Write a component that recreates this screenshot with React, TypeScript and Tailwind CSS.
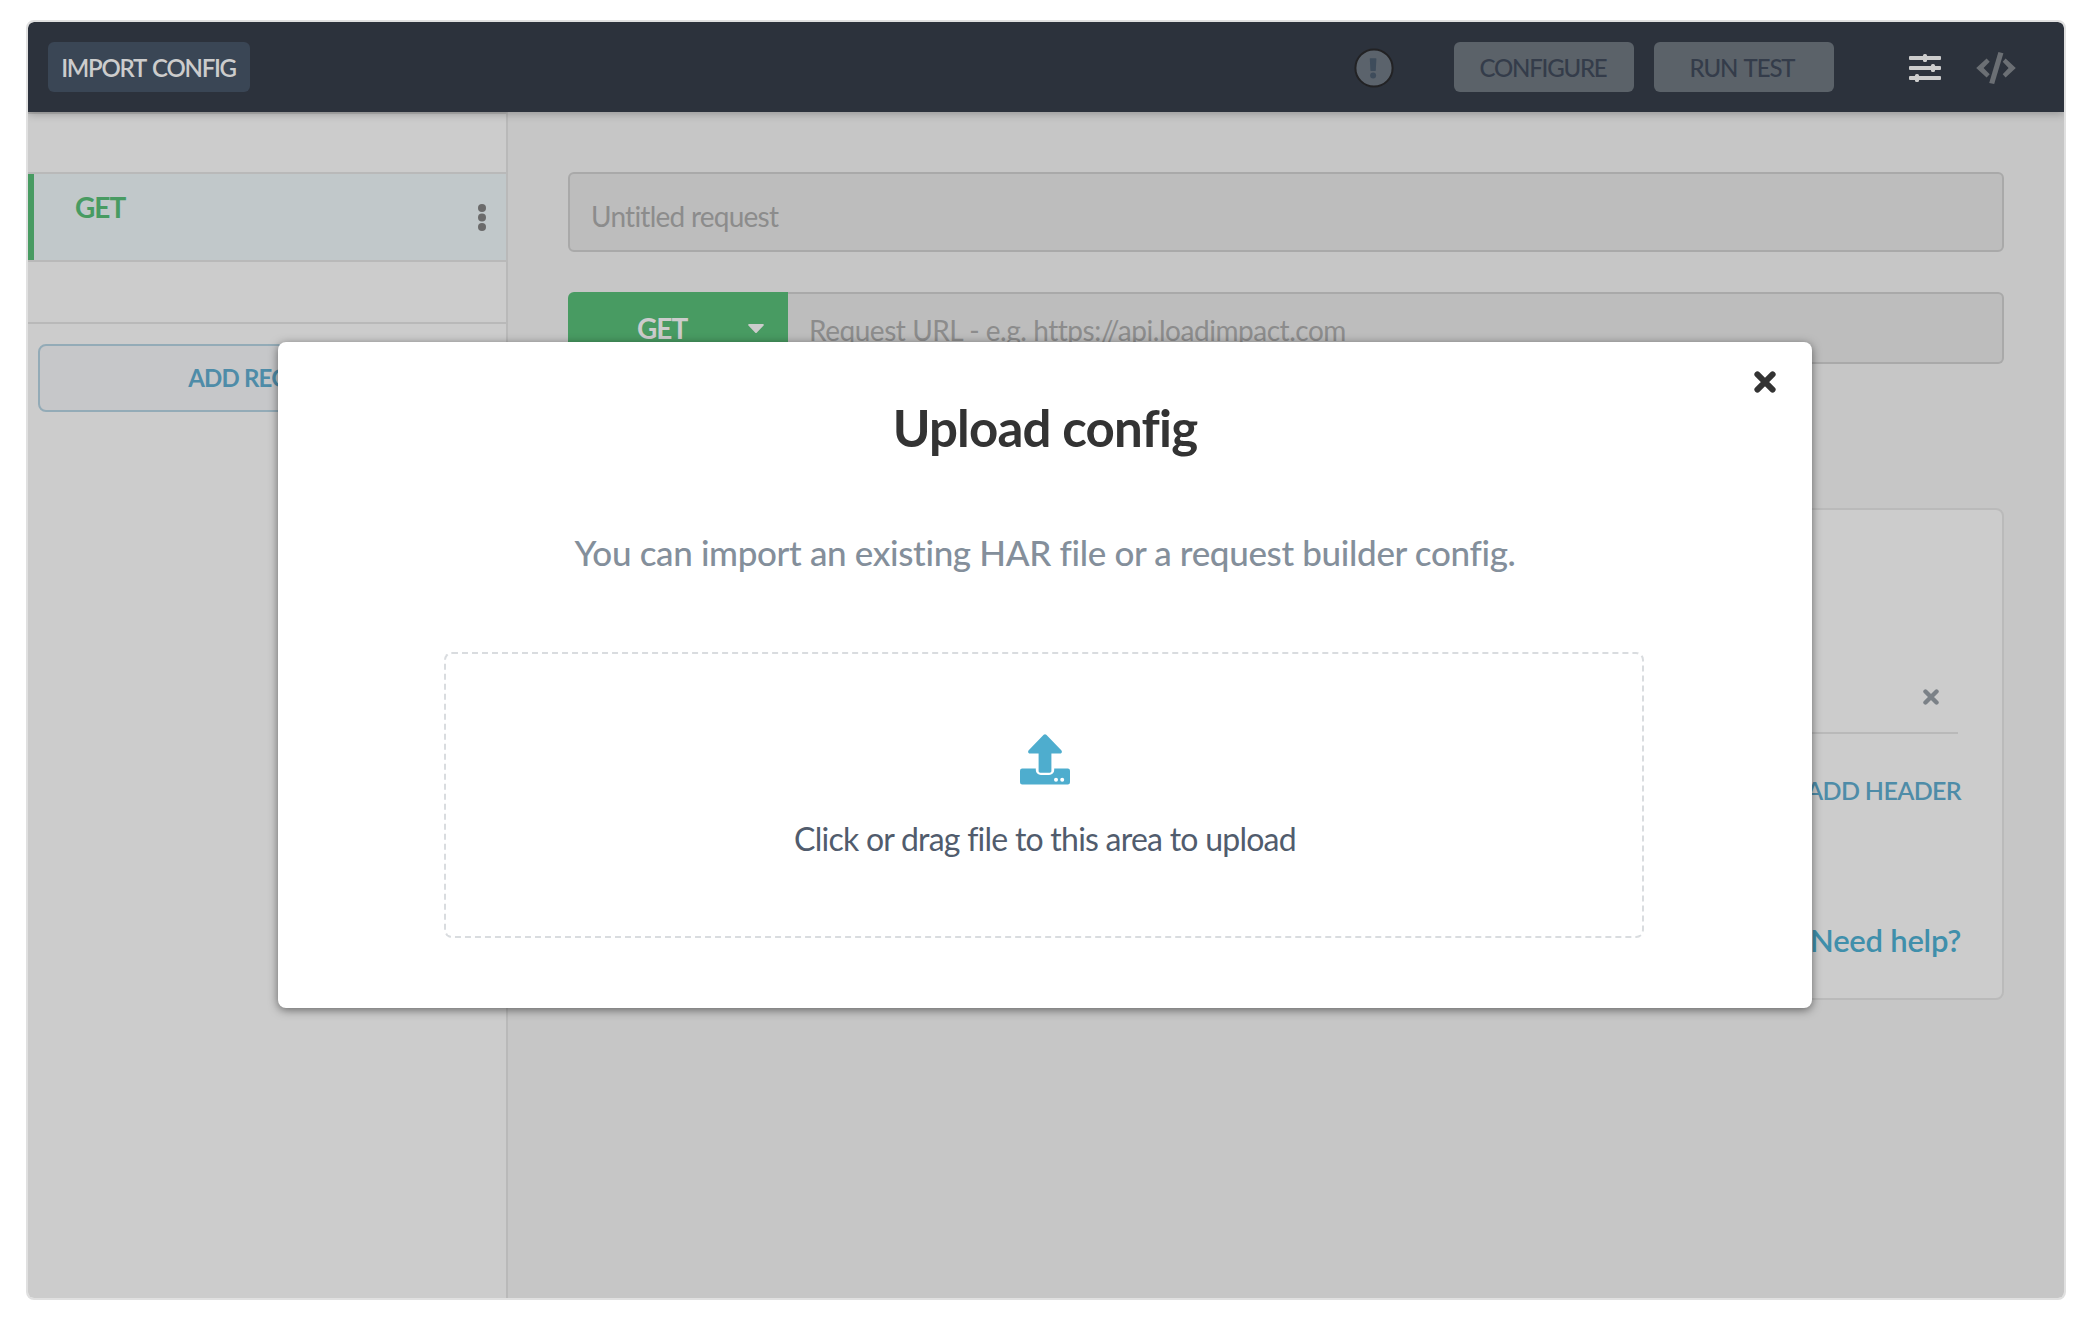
function AlertBadge() {
  return (
    <svg className="h-10 w-10" viewBox="0 0 40 40">
      <circle cx="20" cy="20" r="18.6" fill="#5b636c" stroke="#222224" strokeWidth="2" />
      <path d="M16.4 10.2h5.4a.6.6 0 0 1 .6.7l-.6 11.3a1 1 0 0 1-1 .9h-3.4a1 1 0 0 1-1-.9l-.6-11.3a.6.6 0 0 1 .6-.7z" fill="#3e4c5b" />
      <circle cx="19.1" cy="27.4" r="3" fill="#3e4c5b" />
    </svg>
  );
}

function SlidersIcon() {
  return (
    <svg className="h-8 w-8" viewBox="0 0 32 32" fill="#cccccc">
      <rect x="0" y="4" width="32" height="4" rx="1" />
      <rect x="0" y="14" width="32" height="4" rx="1" />
      <rect x="0" y="24" width="32" height="4" rx="1" />
      <rect x="14" y="2" width="4" height="8" rx="1.5" />
      <rect x="22" y="12" width="4" height="8" rx="1.5" />
      <rect x="6" y="22" width="4" height="8" rx="1.5" />
    </svg>
  );
}

function CodeIcon() {
  return (
    <svg className="h-8 w-10" viewBox="0 0 40 32" fill="#6b6f74">
      <path d="M.2 16 10.6 6.600 13.700 9.800 7.600 16l6.100 6.200-3.100 3.200z" />
      <path d="M39.8 16 29.6 6.6 26.7 9.8 32.6 16l-5.9 6.2 2.9 3.2z" />
      <path d="M22.4 0 27.4 1.2 18.2 32 13.2 31z" />
    </svg>
  );
}

function CrossIcon({ className }: { className: string }) {
  return (
    <svg className={className} viewBox="0 0 22 22" fill="none" stroke="currentColor" strokeWidth="6" strokeLinecap="round">
      <path d="M3.4 3.4 18.6 18.6M18.6 3.4 3.4 18.6" />
    </svg>
  );
}

function UploadIcon() {
  return (
    <svg className="h-[51px] w-[50px]" viewBox="0 0 50 51" fill="#4eadce">
      <path d="M23.7.6a1.8 1.8 0 0 1 2.6 0L41.3 17.4c1.2 1.4.5 3.6-1.3 3.6H31.4V40.4a1.6 1.6 0 0 1-1.6 1.6H20.2a1.6 1.6 0 0 1-1.6-1.6V21H10c-1.8 0-2.5-2.2-1.3-3.6z" transform="translate(0 .2) scale(1 .92)" />
      <path
        fillRule="evenodd"
        d="M2.2 34.6H15.8V36a5 5 0 0 0 5 5h8.4a5 5 0 0 0 5-5v-1.4H47.8A2.2 2.2 0 0 1 50 36.8V48.2a2.2 2.2 0 0 1-2.2 2.2H2.2A2.2 2.2 0 0 1 0 48.2V36.8A2.2 2.2 0 0 1 2.2 34.6zM36 43.7a2 2 0 1 0 0 4 2 2 0 0 0 0-4zM42.2 43.7a2 2 0 1 0 0 4 2 2 0 0 0 0-4z"
      />
    </svg>
  );
}

function Header() {
  return (
    <header className="relative z-10 flex h-[90px] shrink-0 items-center rounded-t-md bg-[#2c323c] px-5 shadow-[0_2px_8px_rgba(0,0,0,0.25)]">
      <button className="h-[50px] w-[202px] rounded-md bg-[#3a4655] pr-px pt-px text-[24px] font-semibold tracking-[-1.25px] text-[#cccccc] [word-spacing:2px]">
        IMPORT CONFIG
      </button>
      <div className="ml-auto mr-[60px] pt-px">
        <AlertBadge />
      </div>
      <div className="flex gap-5 text-[24px] font-medium text-[#343c4a]">
        <button className="h-[50px] w-[180px] rounded-md bg-[#5b6269] pr-0.5 pt-px tracking-[-1.2px]">CONFIGURE</button>
        <button className="h-[50px] w-[180px] rounded-md bg-[#5b6269] pr-1 pt-px tracking-[-1.1px] [word-spacing:2px]">RUN TEST</button>
      </div>
      <div className="ml-[75px] mr-7 flex items-center gap-[35px] pt-0.5">
        <SlidersIcon />
        <CodeIcon />
      </div>
    </header>
  );
}

function Sidebar() {
  return (
    <aside className="flex w-[480px] shrink-0 flex-col border-r-2 border-t-2 border-r-[#b9b9b9] border-t-[#b4b4b4] bg-[#cccccc]">
      <div className="mt-[58px] border-y-2 border-[#b9b9b9]">
        <div className="flex h-[86px] items-start justify-between border-l-[6px] border-[#489b62] bg-[#c1c8ca] pl-[41px] pr-5">
          <span className="mt-4 text-[28px] font-bold leading-[34px] tracking-[-1px] text-[#489b62]">GET</span>
          <svg className="mt-[29px] h-7 w-2" viewBox="0 0 8 28" fill="#6b6b6b">
            <circle cx="4" cy="5" r="4" />
            <circle cx="4" cy="14.5" r="4" />
            <circle cx="4" cy="24" r="4" />
          </svg>
        </div>
      </div>
      <div className="mt-[60px] border-t-2 border-[#b9b9b9] px-[10px] pt-5">
        <button className="h-[68px] w-full rounded-lg border-2 border-[#93abb7] bg-[#c6c7c9] text-[24px] font-bold tracking-[-0.8px] text-[#4e8ca8]">
          ADD REQUEST
        </button>
      </div>
    </aside>
  );
}

function RequestEditor() {
  return (
    <main className="flex grow flex-col bg-[#c6c6c6] px-[60px] pt-[60px]">
      <div className="h-20 rounded-md border-2 border-[#a9a9a9] bg-[#bdbdbd] px-[21px] pt-[25px] text-[28px] leading-[34px] tracking-[-0.75px] text-[#8c8c8c]">
        Untitled request
      </div>
      <div className="mt-10 flex h-[72px]">
        <div className="flex w-[220px] items-start rounded-l-md bg-[#489b62] pl-[69px] pt-[19px]">
          <span className="w-[111px] text-[28px] font-bold leading-[34px] tracking-[-1px] text-[#cccccc]">GET</span>
          <svg className="mt-[13px] h-[9px] w-4" viewBox="0 0 16 9" fill="#cccccc">
            <path d="M1 0h14a.9.9 0 0 1 .6 1.5L8.7 8.7a1 1 0 0 1-1.4 0L.4 1.5A.9.9 0 0 1 1 0z" />
          </svg>
        </div>
        <div className="grow rounded-r-md border-2 border-l-0 border-[#a9a9a9] bg-[#bdbdbd] pl-[21px] pt-[19px] text-[28px] leading-[34px] tracking-[-0.46px] text-[#8c8c8c]">
          Request URL - e.g. https://api.loadimpact.com
        </div>
      </div>
      <section className="mt-36 flex h-[492px] flex-col rounded-lg border-2 border-[#bababa] bg-[#cccccc] px-11">
        <div className="flex h-[224px] items-end justify-end border-b-2 border-[#b9b9b9] pb-[27px] pr-[19px]">
          <CrossIcon className="h-4 w-4 text-[#7b8187]" />
        </div>
        <button className="-mr-[3px] mt-[41px] self-end text-[25px] font-semibold leading-[30px] tracking-[-0.65px] text-[#4e8ca8]">
          ADD HEADER
        </button>
        <a className="-mr-[3px] mt-[116px] self-end text-[31px] font-semibold leading-[38px] tracking-[-0.25px] text-[#3f8fab]">Need help?</a>
      </section>
    </main>
  );
}

function UploadModal() {
  return (
    <div className="absolute left-[278px] top-[342px] z-20 flex h-[666px] w-[1534px] flex-col items-center rounded-lg bg-white shadow-[0_2px_10px_rgba(0,0,0,0.5)]">
      <button className="absolute right-[36.500px] top-[29px] text-[#333333]">
        <CrossIcon className="h-[22px] w-[22px]" />
      </button>
      <h1 className="mt-14 text-[51px] font-bold leading-[60px] tracking-[-0.8px] text-[#333333]">Upload config</h1>
      <p className="mt-[72px] text-[35px] font-medium leading-[44px] tracking-[-0.34px] text-[#848f9b]">
        You can import an existing HAR file or a request builder config.
      </p>
      <div className="mr-[2px] mt-[78px] flex h-[286px] w-[1200px] flex-col items-center rounded-lg border-2 border-dashed border-[#d9dcdf] pt-20">
        <div className="ml-[2px]">
          <UploadIcon />
        </div>
        <p className="ml-[2px] mt-[34px] text-[32px] leading-[40px] tracking-[-0.76px] text-[#515c6d]">Click or drag file to this area to upload</p>
      </div>
    </div>
  );
}

export default function App() {
  return (
    <div className="relative h-[1332px] w-[2100px] overflow-hidden bg-white pl-[26px] pr-[34px] pt-5 font-['Lato',sans-serif]">
      <div className="flex h-[1280px] w-[2040px] flex-col overflow-hidden rounded-lg border-2 border-[#e0e0e0]">
        <Header />
        <div className="flex grow">
          <Sidebar />
          <RequestEditor />
        </div>
      </div>
      <UploadModal />
    </div>
  );
}
